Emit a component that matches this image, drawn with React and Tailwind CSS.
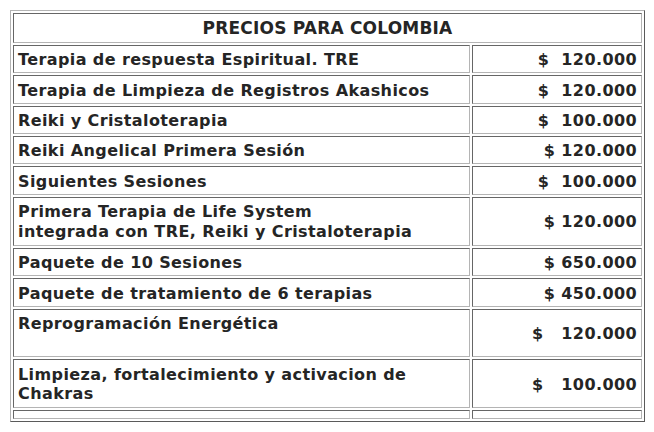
const rows = [
  { label: ['Terapia de respuesta Espiritual. TRE'], price: '$\u00a0\u00a0120.000' },
  { label: ['Terapia de Limpieza de Registros Akashicos'], price: '$\u00a0\u00a0120.000' },
  { label: ['Reiki y Cristaloterapia'], price: '$\u00a0\u00a0100.000' },
  { label: ['Reiki Angelical Primera Sesión'], price: '$\u00a0120.000' },
  { label: ['Siguientes Sesiones'], price: '$\u00a0\u00a0100.000' },
  { label: ['Primera Terapia de Life System', 'integrada con TRE, Reiki y Cristaloterapia'], price: '$\u00a0120.000' },
  { label: ['Paquete de 10 Sesiones'], price: '$\u00a0650.000' },
  { label: ['Paquete de tratamiento de 6 terapias'], price: '$\u00a0450.000' },
  { label: ['Reprogramación Energética', '\u00a0'], price: '$\u00a0\u00a0\u00a0120.000' },
  { label: ['Limpieza, fortalecimiento y activacion de', 'Chakras'], price: '$\u00a0\u00a0\u00a0100.000' },
];

const cell =
  'border border-t-[#666666] border-l-[#666666] border-r-[#b4b4b4] border-b-[#b4b4b4] px-[4px] align-middle';

export default function App() {
  return (
    <div className="min-h-screen bg-white pt-[10px] pl-[10px]">
      <table
        className="w-[635px] border-separate border-spacing-[2px] border border-t-[#b4b4b4] border-l-[#b4b4b4] border-r-[#5a5a5a] border-b-[#5a5a5a] text-[16px] leading-[1.215] font-bold tracking-[0.4px] text-[#252525]"
        style={{ fontFamily: '"DejaVu Sans", Verdana, sans-serif' }}
      >
        <tbody>
          <tr>
            <td colSpan={2} className={`${cell} pt-[4px] pb-[3px] text-center text-[17px] tracking-[0.2px]`}>
              PRECIOS PARA COLOMBIA
            </td>
          </tr>
          {rows.map((row, i) => {
            const pad = row.label.length > 1 ? 'pt-[4.5px] pb-[3.5px]' : 'pt-[4.5px] pb-[2.5px]';
            return (
              <tr key={i}>
                <td className={`${cell} ${pad} w-[457px] text-left`}>
                  {row.label.map((line, j) => (
                    <div key={j}>{line}</div>
                  ))}
                </td>
                <td className={`${cell} ${pad} w-[170px] text-right`}>{row.price}</td>
              </tr>
            );
          })}
          <tr>
            <td className={`${cell} h-[9px] py-0`}></td>
            <td className={`${cell} h-[9px] py-0`}></td>
          </tr>
        </tbody>
      </table>
    </div>
  );
}
